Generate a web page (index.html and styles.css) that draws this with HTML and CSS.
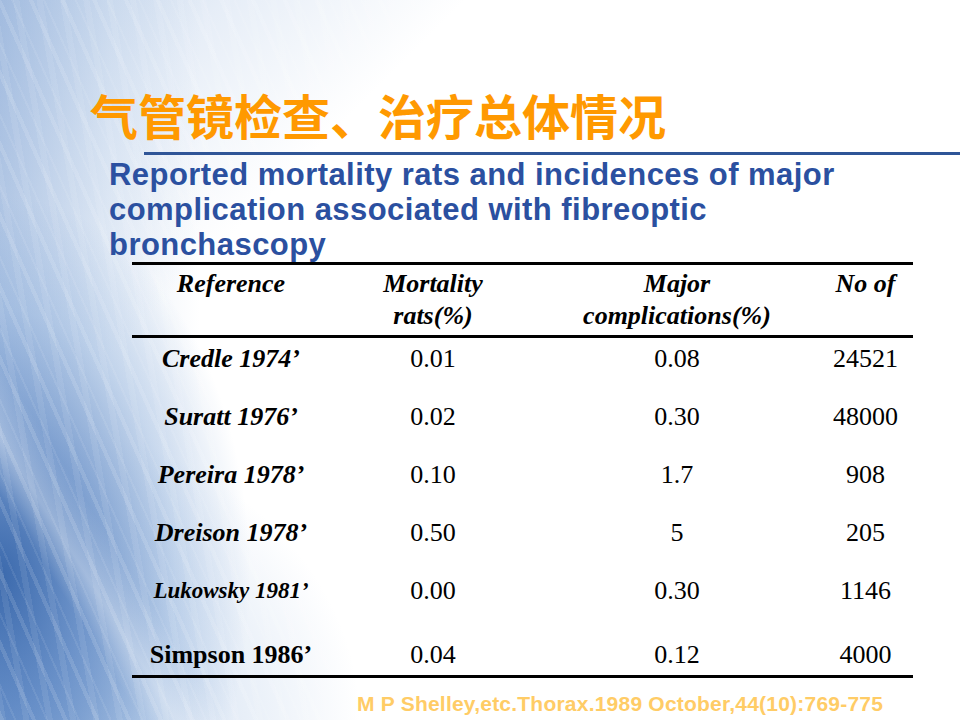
FILE: index.html
```html
<!DOCTYPE html>
<html lang="zh-CN">
<head>
<meta charset="utf-8">
<title>气管镜检查、治疗总体情况</title>
<link rel="stylesheet" href="styles.css">
</head>
<body>
<div class="slide">
  <h1 class="title">气管镜检查、治疗总体情况</h1>
  <div class="rule"></div>
  <p class="subtitle">Reported mortality rats and incidences of major complication associated with fibreoptic bronchascopy</p>
  <div class="table">
    <div class="row head">
      <div class="cell">Reference</div>
      <div class="cell">Mortality<br>rats(%)</div>
      <div class="cell">Major<br>complications(%)</div>
      <div class="cell">No of</div>
    </div>
    <div class="body">
      <div class="row">
        <div class="cell ref">Credle 1974’</div>
        <div class="cell">0.01</div>
        <div class="cell">0.08</div>
        <div class="cell">24521</div>
      </div>
      <div class="row">
        <div class="cell ref">Suratt 1976’</div>
        <div class="cell">0.02</div>
        <div class="cell">0.30</div>
        <div class="cell">48000</div>
      </div>
      <div class="row">
        <div class="cell ref">Pereira 1978’</div>
        <div class="cell">0.10</div>
        <div class="cell">1.7</div>
        <div class="cell">908</div>
      </div>
      <div class="row">
        <div class="cell ref">Dreison 1978’</div>
        <div class="cell">0.50</div>
        <div class="cell">5</div>
        <div class="cell">205</div>
      </div>
      <div class="row tall">
        <div class="cell ref small">Lukowsky 1981’</div>
        <div class="cell">0.00</div>
        <div class="cell">0.30</div>
        <div class="cell">1146</div>
      </div>
      <div class="row last">
        <div class="cell ref upright">Simpson 1986’</div>
        <div class="cell">0.04</div>
        <div class="cell">0.12</div>
        <div class="cell">4000</div>
      </div>
    </div>
  </div>
  <p class="cite">M P Shelley,etc.Thorax.1989 October,44(10):769-775</p>
</div>
</body>
</html>
```
FILE: styles.css
```css
html, body {
  margin: 0;
  padding: 0;
}

body {
  width: 960px;
  height: 720px;
  overflow: hidden;
  background:
    repeating-linear-gradient(66deg, rgba(255,255,255,0.12) 0 4px, rgba(255,255,255,0) 4px 13px, rgba(255,255,255,0.08) 13px 15px, rgba(255,255,255,0) 15px 29px),
    repeating-linear-gradient(80deg, rgba(255,255,255,0.08) 0 6px, rgba(255,255,255,0) 6px 23px),
    linear-gradient(58deg, rgba(255,255,255,0) 0px, rgba(255,255,255,0) 120px, rgba(255,255,255,0.35) 150px, rgba(255,255,255,0) 190px),
    radial-gradient(ellipse 250px 380px at 0% 80%, rgba(50,98,168,0.92) 0%, rgba(80,125,190,0.7) 35%, rgba(120,160,212,0.35) 70%, rgba(255,255,255,0) 100%),
    radial-gradient(ellipse 360px 300px at 0% 100%, rgba(95,140,200,0.55) 0%, rgba(140,175,220,0.25) 60%, rgba(255,255,255,0) 100%),
    linear-gradient(90deg, rgba(125,160,210,0.5) 0px, rgba(165,192,226,0.25) 110px, rgba(255,255,255,0) 200px),
    linear-gradient(135deg, rgba(192,210,234,0.9) 0px, rgba(214,226,242,0.6) 160px, rgba(255,255,255,0) 330px),
    #ffffff;
}

.slide {
  display: flex;
  flex-direction: column;
  align-items: flex-start;
  padding-top: 90px;
}

.title {
  margin: 0 0 0 90px;
  font-family: "Noto Sans CJK SC", "Noto Sans", sans-serif;
  font-weight: 700;
  font-size: 48px;
  line-height: 48px;
  color: #ff9900;
}

.rule {
  align-self: stretch;
  margin: 14px 0 0 144px;
  height: 3px;
  background: #2f5597;
}

.subtitle {
  margin: 2px 0 0 109px;
  width: 790px;
  font-family: "Liberation Sans", Arial, sans-serif;
  font-weight: 700;
  font-size: 31px;
  line-height: 35px;
  letter-spacing: 0.45px;
  color: #2b50a0;
}

.table {
  margin: 0 0 0 132px;
  width: 781px;
  border-top: 3px solid #000;
  border-bottom: 3px solid #000;
  font-family: "Liberation Serif", "Times New Roman", serif;
  font-size: 26px;
  color: #000;
}

.row {
  display: grid;
  grid-template-columns: 198px 206px 282px 95px;
  text-align: center;
}

.head {
  padding: 3px 0 3px;
  border-bottom: 3px solid #000;
  font-weight: 700;
  font-style: italic;
  line-height: 32px;
}

.body .row {
  height: 58px;
  box-sizing: border-box;
  padding-top: 6px;
  line-height: 30px;
}

.body .row.tall {
  height: 64px;
}

.body .row.last {
  height: 41px;
}

.ref {
  font-weight: 700;
  font-style: italic;
}

.ref.small {
  font-size: 23px;
}

.ref.upright {
  font-style: normal;
}

.cite {
  margin: 14px 0 0 357px;
  font-family: "Liberation Sans", Arial, sans-serif;
  font-weight: 700;
  font-size: 21px;
  line-height: 24px;
  letter-spacing: 0.22px;
  color: #ffcc66;
}
```
